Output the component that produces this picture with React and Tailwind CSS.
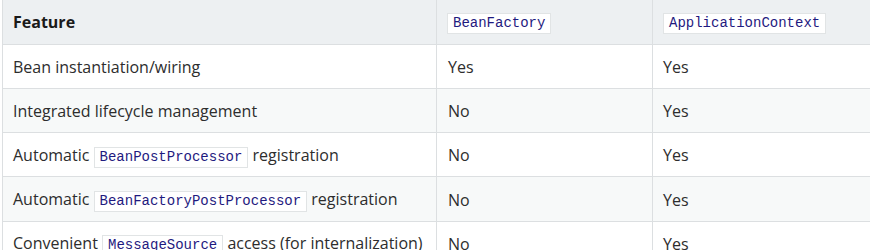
import React from "react";

const Code = ({ children }) => (
  <code className="inline-block border border-[#e1e4e5] bg-white px-[5px] leading-[19px] text-[14px] text-[#1f1a80] [font-family:'Liberation_Mono',monospace]">
    {children}
  </code>
);

const rows = [
  [<>Bean instantiation/wiring</>, "Yes", "Yes"],
  [<>Integrated lifecycle management</>, "No", "Yes"],
  [<>Automatic <Code>BeanPostProcessor</Code> registration</>, "No", "Yes"],
  [<>Automatic <Code>BeanFactoryPostProcessor</Code> registration</>, "No", "Yes"],
  [<>Convenient <Code>MessageSource</Code> access (for internalization)</>, "No", "Yes"],
];

export default function App() {
  return (
    <div className="w-[889px] h-[250px] overflow-hidden bg-white pl-[2px] [font-family:'Open_Sans',sans-serif]">
      <table className="w-[867px] border-collapse table-fixed text-[16px] text-[#2d2d2d]">
        <colgroup>
          <col className="w-[434px]" />
          <col className="w-[216px]" />
          <col className="w-[217px]" />
        </colgroup>
        <thead>
          <tr className="h-[44px] bg-[#edf0f2]">
            <th className="border-l border-b border-[#dcdfe1] pl-[10px] pr-[11px] text-left font-bold text-[#1a1a1a]">Feature</th>
            <th className="border-l border-b border-[#dcdfe1] pl-[10px] pr-[11px] text-left font-normal"><Code>BeanFactory</Code></th>
            <th className="border-l border-b border-[#dcdfe1] pl-[10px] pr-[11px] text-left font-normal"><Code>ApplicationContext</Code></th>
          </tr>
        </thead>
        <tbody>
          {rows.map((r, i) => (
            <tr key={i} className={`h-[44.3px] ${i % 2 === 1 ? "bg-[#f7f9f9]" : "bg-white"}`}>
              <td className="border-l border-b border-[#dcdfe1] pl-[10px] pr-[11px] pt-[1px] whitespace-nowrap">{r[0]}</td>
              <td className="border-l border-b border-[#dcdfe1] pl-[11px] pr-[11px] pt-[1px]">{r[1]}</td>
              <td className="border-l border-b border-[#dcdfe1] pl-[10px] pr-[11px] pt-[1px]">{r[2]}</td>
            </tr>
          ))}
        </tbody>
      </table>
    </div>
  );
}
